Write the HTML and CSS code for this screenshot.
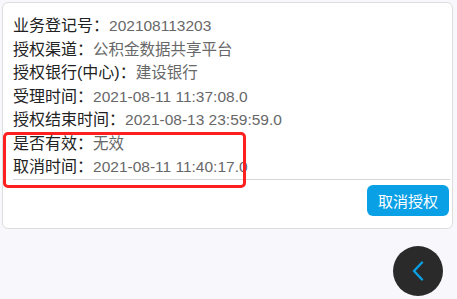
FILE: index.html
```html
<!DOCTYPE html>
<html lang="zh">
<head>
    <meta charset="UTF-8">
    <meta name="viewport" content="width=device-width, initial-scale=1.0">
    <title>授权详情</title>
    <link rel="stylesheet" href="styles.css">
</head>
<body>

<div class="card">
    <div class="info">
        <p><span class="label">业务登记号：</span><span class="value">202108113203</span></p>
        <p><span class="label">授权渠道：</span><span class="value">公积金数据共享平台</span></p>
        <p><span class="label">授权银行(中心)：</span><span class="value">建设银行</span></p>
        <p><span class="label">受理时间：</span><span class="value">2021-08-11 11:37:08.0</span></p>
        <p><span class="label">授权结束时间：</span><span class="value">2021-08-13 23:59:59.0</span></p>
        <p><span class="label">是否有效：</span><span class="value">无效</span></p>
        <p><span class="label">取消时间：</span><span class="value">2021-08-11 11:40:17.0</span></p>
    </div>
    <div class="actions">
        <button class="btn-cancel">取消授权</button>
    </div>
    <div class="highlight"></div>
</div>

<div class="back-btn">
    <svg width="14" height="20" viewBox="0 0 14 20">
        <path d="M11 1.5 L3 10 L11 18.5" fill="none" stroke="#0aa0e6" stroke-width="2.4" stroke-linecap="round" stroke-linejoin="round"/>
    </svg>
</div>

</body>
</html>
```

FILE: styles.css
```css
* {
    margin: 0;
    padding: 0;
    box-sizing: border-box;
    font-family: "Liberation Sans", "Noto Sans CJK SC", sans-serif;
}
body {
    background-color: #f8f7fc;
    width: 457px;
    height: 299px;
    overflow: hidden;
    position: relative;
}
.card {
    position: relative;
    margin: 2px 4px 0 2px;
    background: white;
    border: 1px solid #dddcdf;
    border-radius: 6px;
    padding: 11px 2px 12px 10px;
}
.info {
    border-bottom: 1px solid #d6d6d6;
}
.info p {
    display: block;
    height: 23.5px;
    font-size: 16px;
    line-height: 23.5px;
    white-space: nowrap;
    overflow: hidden;
}
.label {
    color: #222;
}
.value {
    color: #686868;
    font-size: 15.5px;
}
.actions {
    display: flex;
    justify-content: flex-end;
    padding-top: 5px;
    padding-right: 1px;
}
.btn-cancel {
    background: #0aa0e6;
    color: white;
    border: none;
    border-radius: 6px;
    width: 82px;
    height: 31px;
    font-size: 15px;
    cursor: pointer;
}
.highlight {
    position: absolute;
    left: 0;
    top: 129px;
    width: 243px;
    height: 56px;
    border: 3px solid #ff1f1f;
    border-radius: 5px;
}
.back-btn {
    position: absolute;
    left: 393px;
    top: 246px;
    width: 50px;
    height: 50px;
    border-radius: 50%;
    background: #2a2a2a;
    display: flex;
    justify-content: center;
    align-items: center;
}
```
